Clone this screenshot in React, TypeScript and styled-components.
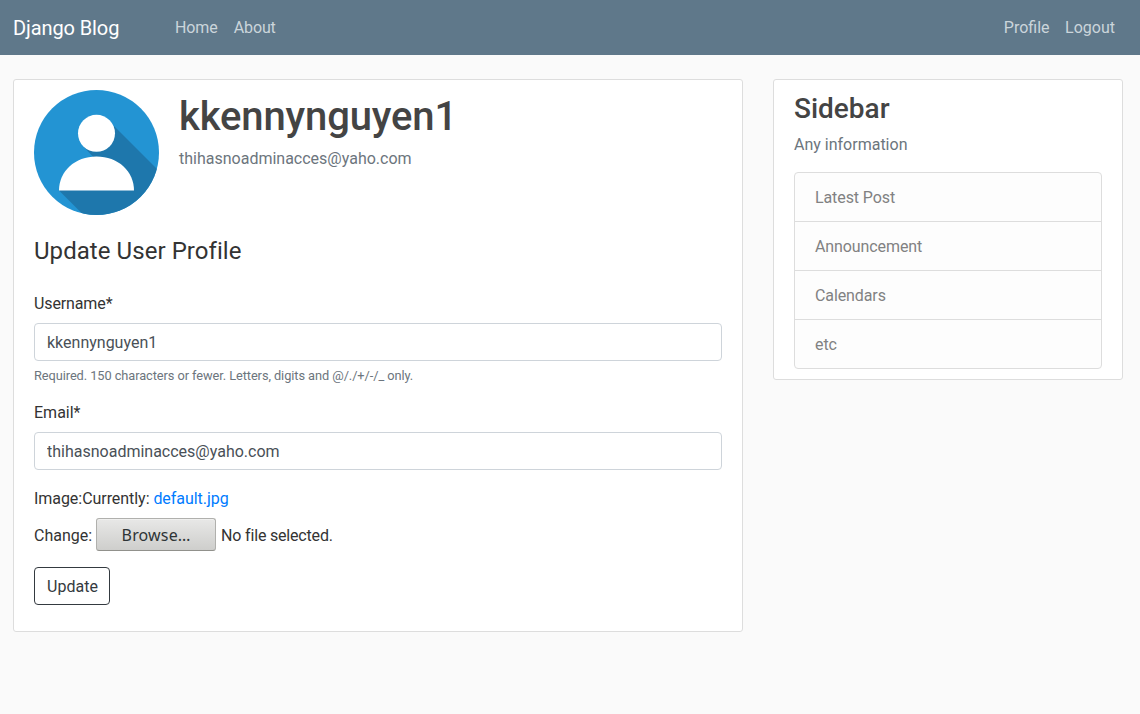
import React from "react";
import styled, { createGlobalStyle } from "styled-components";

const GlobalStyle = createGlobalStyle`
  *, *::before, *::after { box-sizing: border-box; }
  body {
    margin: 0;
    background: #fafafa;
    color: #333333;
    font: 400 16px/24px Roboto, sans-serif;
  }
`;

const Header = styled.header`
  display: flex;
  align-items: center;
  height: 55px;
  padding: 0 25px 0 13px;
  background: #5f788a;
`;

const Brand = styled.a`
  width: 106px;
  margin-right: 56px;
  color: #ffffff;
  font-size: 20px;
  line-height: 30px;
  letter-spacing: -0.1px;
  white-space: nowrap;
`;

const Nav = styled.nav<{ $end?: boolean }>`
  display: flex;
  gap: ${(p) => (p.$end ? "15.5px" : "16px")};
  margin-left: ${(p) => (p.$end ? "auto" : "0")};
`;

const NavLink = styled.a`
  color: #cbd5db;
  letter-spacing: -0.1px;

  ${Nav}:last-child > & { letter-spacing: 0; }
`;

const Main = styled.main`
  display: grid;
  grid-template-columns: 730px 350px;
  gap: 30px;
  align-items: start;
  padding: 24px 17px 0 13px;
`;

const Card = styled.section<{ $bottom?: number }>`
  padding: 10px 20px ${(p) => p.$bottom ?? 10}px;
  background: #ffffff;
  border: 1px solid #dddddd;
  border-radius: 3px;
`;

const Profile = styled.div`
  display: flex;
  gap: 20px;
  margin-bottom: 18px;
`;

const Avatar = styled.svg`
  display: block;
  width: 125px;
  height: 125px;
`;

const AccountName = styled.h1`
  margin: 3px 0 6px;
  color: #444444;
  font-size: 40px;
  font-weight: 500;
  line-height: 48px;
  letter-spacing: -0.14px;
`;

const Muted = styled.p`
  margin: 0;
  color: #6c757d;
`;

const Legend = styled.h2`
  margin: 0 0 23px;
  font-size: 24px;
  font-weight: 400;
  line-height: 36px;
  letter-spacing: 0.06px;
`;

const Field = styled.div`
  margin-bottom: 16px;
`;

const Label = styled.label`
  display: block;
  margin-bottom: 7px;
`;

const UsernameLabel = styled(Label)`
  letter-spacing: -0.12px;
`;

const Input = styled.input`
  display: block;
  width: 100%;
  height: 38px;
  padding: 6px 12px;
  color: #495057;
  font: inherit;
  background: #ffffff;
  border: 1px solid #ced4da;
  border-radius: 4px;
`;

const Help = styled.small`
  display: block;
  height: 19px;
  margin-top: 5px;
  color: #6c757d;
  font-size: 12.8px;
  line-height: 19.2px;
  letter-spacing: -0.07px;
`;

const CurrentFile = styled.div`
  margin-top: 17px;
  letter-spacing: -0.05px;
`;

const FileLink = styled.a`
  color: #007bff;
`;

const FileRow = styled.div`
  display: flex;
  align-items: center;
  height: 33px;
  margin: 7px 0 16px;
`;

const FileText = styled.span<{ $tight?: boolean }>`
  padding-top: 2px;
  letter-spacing: ${(p) => (p.$tight ? "-0.18px" : "0")};
`;

const BrowseButton = styled.button`
  width: 120px;
  height: 33px;
  margin: 0 5px 0 4px;
  padding: 0;
  color: #2e3436;
  font: 400 16px/22px "Noto Sans", sans-serif;
  letter-spacing: 0.15px;
  background: linear-gradient(#e8e8e7, #cececc);
  border: 1px solid #b0b0ad;
  border-bottom-color: #91918c;
  border-radius: 3px;
  box-shadow: inset 0 1px #f0f0ef;
`;

const UpdateButton = styled.button`
  display: block;
  width: 76px;
  height: 38px;
  padding: 2px 0 0 1px;
  color: #343a40;
  font: inherit;
  background: transparent;
  border: 1px solid #343a40;
  border-radius: 4px;
`;

const SidebarTitle = styled.h3`
  margin: 3px 0 8px;
  color: #444444;
  font-size: 28px;
  font-weight: 500;
  line-height: 32px;
`;

const List = styled.ul`
  margin: 15px 0 0;
  padding: 0;
  list-style: none;
  background: #fdfdfd;
  border: 1px solid #dddddd;
  border-radius: 4px;
`;

const ListItem = styled.li`
  height: 49px;
  padding: 13px 20px 11px;
  color: #818182;
  letter-spacing: -0.1px;
  border-bottom: 1px solid #dddddd;

  &:last-child {
    height: 48px;
    border-bottom: 0;
  }
`;

const sidebarItems = ["Latest Post", "Announcement", "Calendars", "etc"];

function UserAvatar() {
  return (
    <Avatar viewBox="0 0 125 125" aria-label="Profile picture">
      <defs>
        <clipPath id="disc">
          <circle cx="62.5" cy="62.5" r="62.5" />
        </clipPath>
      </defs>
      <g clipPath="url(#disc)">
        <rect width="125" height="125" fill="#2394d3" />
        <path
          d="M80 36 L125 81 V125 H49.5 L25 100.5 L62 70 L49.5 56.5 Z"
          fill="#1e77ac"
        />
      </g>
      <circle cx="62.5" cy="43.3" r="18.5" fill="#ffffff" />
      <path d="M25 100.5 C25 81 41 66.4 62.5 66.4 S100 81 100 100.5 Z" fill="#ffffff" />
    </Avatar>
  );
}

export default function App() {
  return (
    <>
      <GlobalStyle />
      <Header>
        <Brand>Django Blog</Brand>
        <Nav>
          <NavLink>Home</NavLink>
          <NavLink>About</NavLink>
        </Nav>
        <Nav $end>
          <NavLink>Profile</NavLink>
          <NavLink>Logout</NavLink>
        </Nav>
      </Header>
      <Main>
        <Card $bottom={26}>
          <Profile>
            <UserAvatar />
            <div>
              <AccountName>kkennynguyen1</AccountName>
              <Muted>thihasnoadminacces@yaho.com</Muted>
            </div>
          </Profile>
          <form>
            <Legend>Update User Profile</Legend>
            <Field>
              <UsernameLabel htmlFor="username">Username*</UsernameLabel>
              <Input id="username" defaultValue="kkennynguyen1" />
              <Help>Required. 150 characters or fewer. Letters, digits and @/./+/-/_ only.</Help>
            </Field>
            <Field>
              <Label htmlFor="email">Email*</Label>
              <Input id="email" defaultValue="thihasnoadminacces@yaho.com" />
            </Field>
            <CurrentFile>
              Image:Currently: <FileLink>default.jpg</FileLink>
            </CurrentFile>
            <FileRow>
              <FileText>Change:</FileText>
              <BrowseButton type="button">Browse…</BrowseButton>
              <FileText $tight>No file selected.</FileText>
            </FileRow>
            <UpdateButton type="button">Update</UpdateButton>
          </form>
        </Card>
        <Card>
          <SidebarTitle>Sidebar</SidebarTitle>
          <Muted>Any information</Muted>
          <List>
            {sidebarItems.map((item) => (
              <ListItem key={item}>{item}</ListItem>
            ))}
          </List>
        </Card>
      </Main>
    </>
  );
}
